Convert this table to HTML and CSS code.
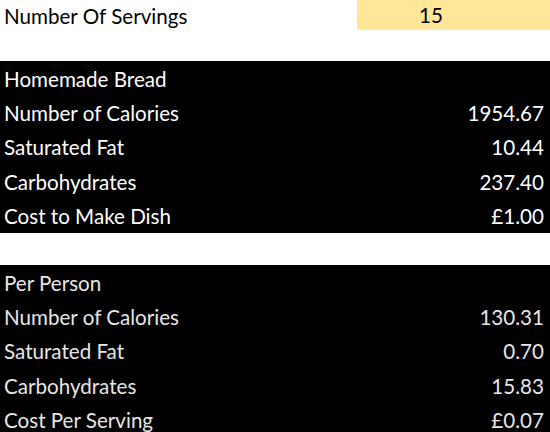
FILE: index.html
```html
<!DOCTYPE html>
<html>
<head>
<meta charset="utf-8">
<link rel="stylesheet" href="styles.css">
</head>
<body>
<div class="sheet">
  <div class="row top">
    <div class="label">Number Of Servings</div>
    <div class="servings">15</div>
  </div>
  <div class="spacer s1"></div>
  <div class="block">
    <div class="row r"><div class="label">Homemade Bread</div><div class="val"></div></div>
    <div class="row r"><div class="label">Number of Calories</div><div class="val">1954.67</div></div>
    <div class="row r"><div class="label">Saturated Fat</div><div class="val">10.44</div></div>
    <div class="row r"><div class="label">Carbohydrates</div><div class="val">237.40</div></div>
    <div class="row r"><div class="label">Cost to Make Dish</div><div class="val">£1.00</div></div>
  </div>
  <div class="spacer s2"></div>
  <div class="block grey">
    <div class="row r"><div class="label">Per Person</div><div class="val"></div></div>
    <div class="row r"><div class="label">Number of Calories</div><div class="val">130.31</div></div>
    <div class="row r"><div class="label">Saturated Fat</div><div class="val">0.70</div></div>
    <div class="row r"><div class="label">Carbohydrates</div><div class="val">15.83</div></div>
    <div class="row r"><div class="label">Cost Per Serving</div><div class="val">£0.07</div></div>
  </div>
</div>
</body>
</html>
```
FILE: styles.css
```css
html, body {
  margin: 0;
  padding: 0;
  background: #ffffff;
  overflow: hidden;
}
.sheet {
  width: 550px;
  height: 432px;
  font-family: Lato, "Open Sans", sans-serif;
  font-size: 20.6px;
  color: #000;
}
.row {
  display: flex;
  align-items: center;
  justify-content: space-between;
}
.top {
  height: 30px;
}
.top .label {
  padding-left: 4px;
  padding-top: 1px;
}
.servings {
  width: 148px;
  padding-right: 45px;
  height: 30px;
  background: #ffe699;
  display: flex;
  align-items: center;
  justify-content: center;
}
.s1 { height: 31px; }
.s2 { height: 32px; }
.block {
  background: #000;
  color: #fff;
}
.block.grey {
  color: #e7e6e6;
}
.r {
  height: 34.4px;
  padding: 1px 6px 0 4px;
  box-sizing: border-box;
}
```
